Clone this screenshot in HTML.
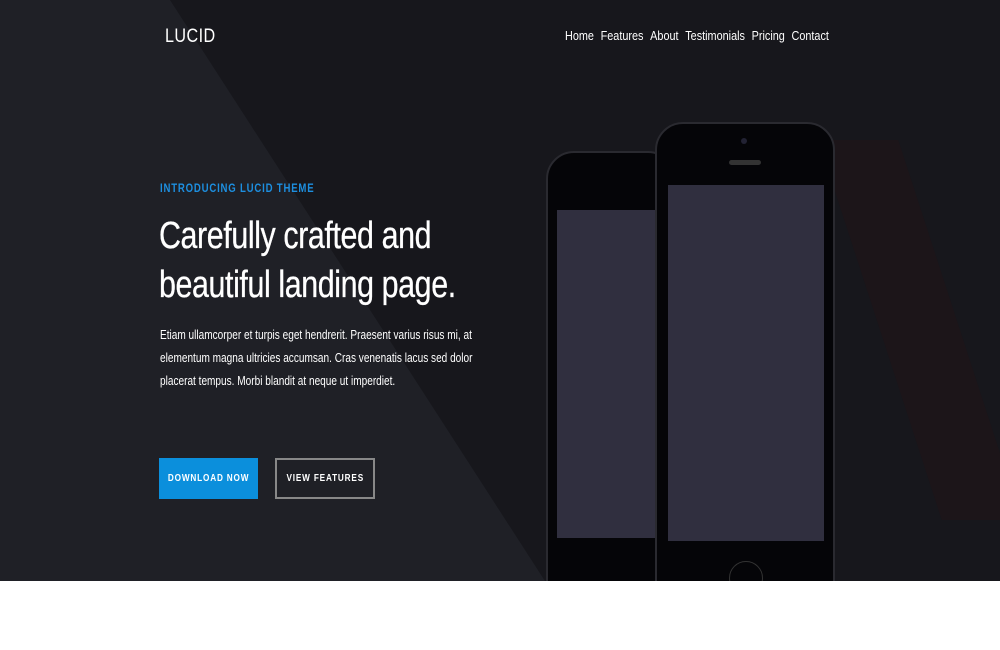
<!DOCTYPE html>
<html><head><meta charset="utf-8"><style>
*{margin:0;padding:0;box-sizing:border-box}
body{width:1000px;height:650px;background:#fff;font-family:"Liberation Sans",sans-serif;overflow:hidden}
.hero{position:absolute;left:0;top:0;width:1000px;height:581px;background:#17171c;overflow:hidden}
.lap{position:absolute;left:0;top:0;width:1000px;height:581px;background:#1f2026;clip-path:polygon(0 0,170px 0,545px 581px,0 581px)}
.logo{position:absolute;left:165px;top:26px;color:#fff;font-size:19px;letter-spacing:0.5px;transform:scaleX(0.85);transform-origin:left}
.nav{position:absolute;top:28px;left:565px;color:#fff;font-size:13px;display:flex;gap:8px;transform:scaleX(0.835);transform-origin:left;white-space:nowrap}
.intro{position:absolute;left:160px;top:181px;color:#1d8fe0;font-size:12px;letter-spacing:1px;font-weight:bold;transform:scaleX(0.8);transform-origin:left;white-space:nowrap}
h1{position:absolute;left:159px;top:212px;color:#fff;font-weight:normal;font-size:38px;line-height:49px;letter-spacing:-0.5px;transform:scaleX(0.8);transform-origin:left;white-space:nowrap;-webkit-text-stroke:0.3px #fff}
p{position:absolute;left:160px;top:323px;color:#fff;font-size:13px;line-height:23px;white-space:nowrap;transform:scaleX(0.775);transform-origin:left}
.btn{position:absolute;top:458px;height:41px;color:#fff;display:flex;align-items:center;justify-content:center}
.btn span{font-size:10px;font-weight:bold;letter-spacing:1px;transform:scaleX(0.82);white-space:nowrap}
.b1{left:159px;width:99px;background:#0b8fdc}
.b2{left:275px;width:100px;border:2px solid #888}
.phone{position:absolute;background:#050508;border:2px solid #2a2a30;border-radius:28px 28px 0 0}
.scr{position:absolute;background:#302f3f}
</style></head><body>
<div class="hero">
<div class="lap"></div>
<div style="position:absolute;left:880px;top:140px;width:80px;height:380px;background:#1c1519;transform:skewX(18deg)"></div>
<div class="logo">LUCID</div>
<div class="nav"><span>Home</span><span>Features</span><span>About</span><span>Testimonials</span><span>Pricing</span><span>Contact</span></div>
<div class="intro">INTRODUCING LUCID THEME</div>
<h1>Carefully crafted and<br>beautiful landing page.</h1>
<p>Etiam ullamcorper et turpis eget hendrerit. Praesent varius risus mi, at<br>elementum magna ultricies accumsan. Cras venenatis lacus sed dolor<br>placerat tempus. Morbi blandit at neque ut imperdiet.</p>
<div class="btn b1"><span>DOWNLOAD NOW</span></div>
<div class="btn b2"><span>VIEW FEATURES</span></div>
<div class="phone" style="left:546px;top:151px;width:130px;height:440px"><div class="scr" style="left:9px;top:57px;width:110px;height:328px"></div></div>
<div class="phone" style="left:655px;top:122px;width:180px;height:470px"><div style="position:absolute;left:84px;top:14px;width:6px;height:6px;border-radius:3px;background:#223"></div><div style="position:absolute;left:72px;top:36px;width:32px;height:5px;border-radius:3px;background:#333"></div><div class="scr" style="left:11px;top:61px;width:156px;height:356px"></div><div style="position:absolute;left:72px;top:437px;width:34px;height:34px;border-radius:17px;border:1px solid #333"></div></div>
</div>
</body></html>
